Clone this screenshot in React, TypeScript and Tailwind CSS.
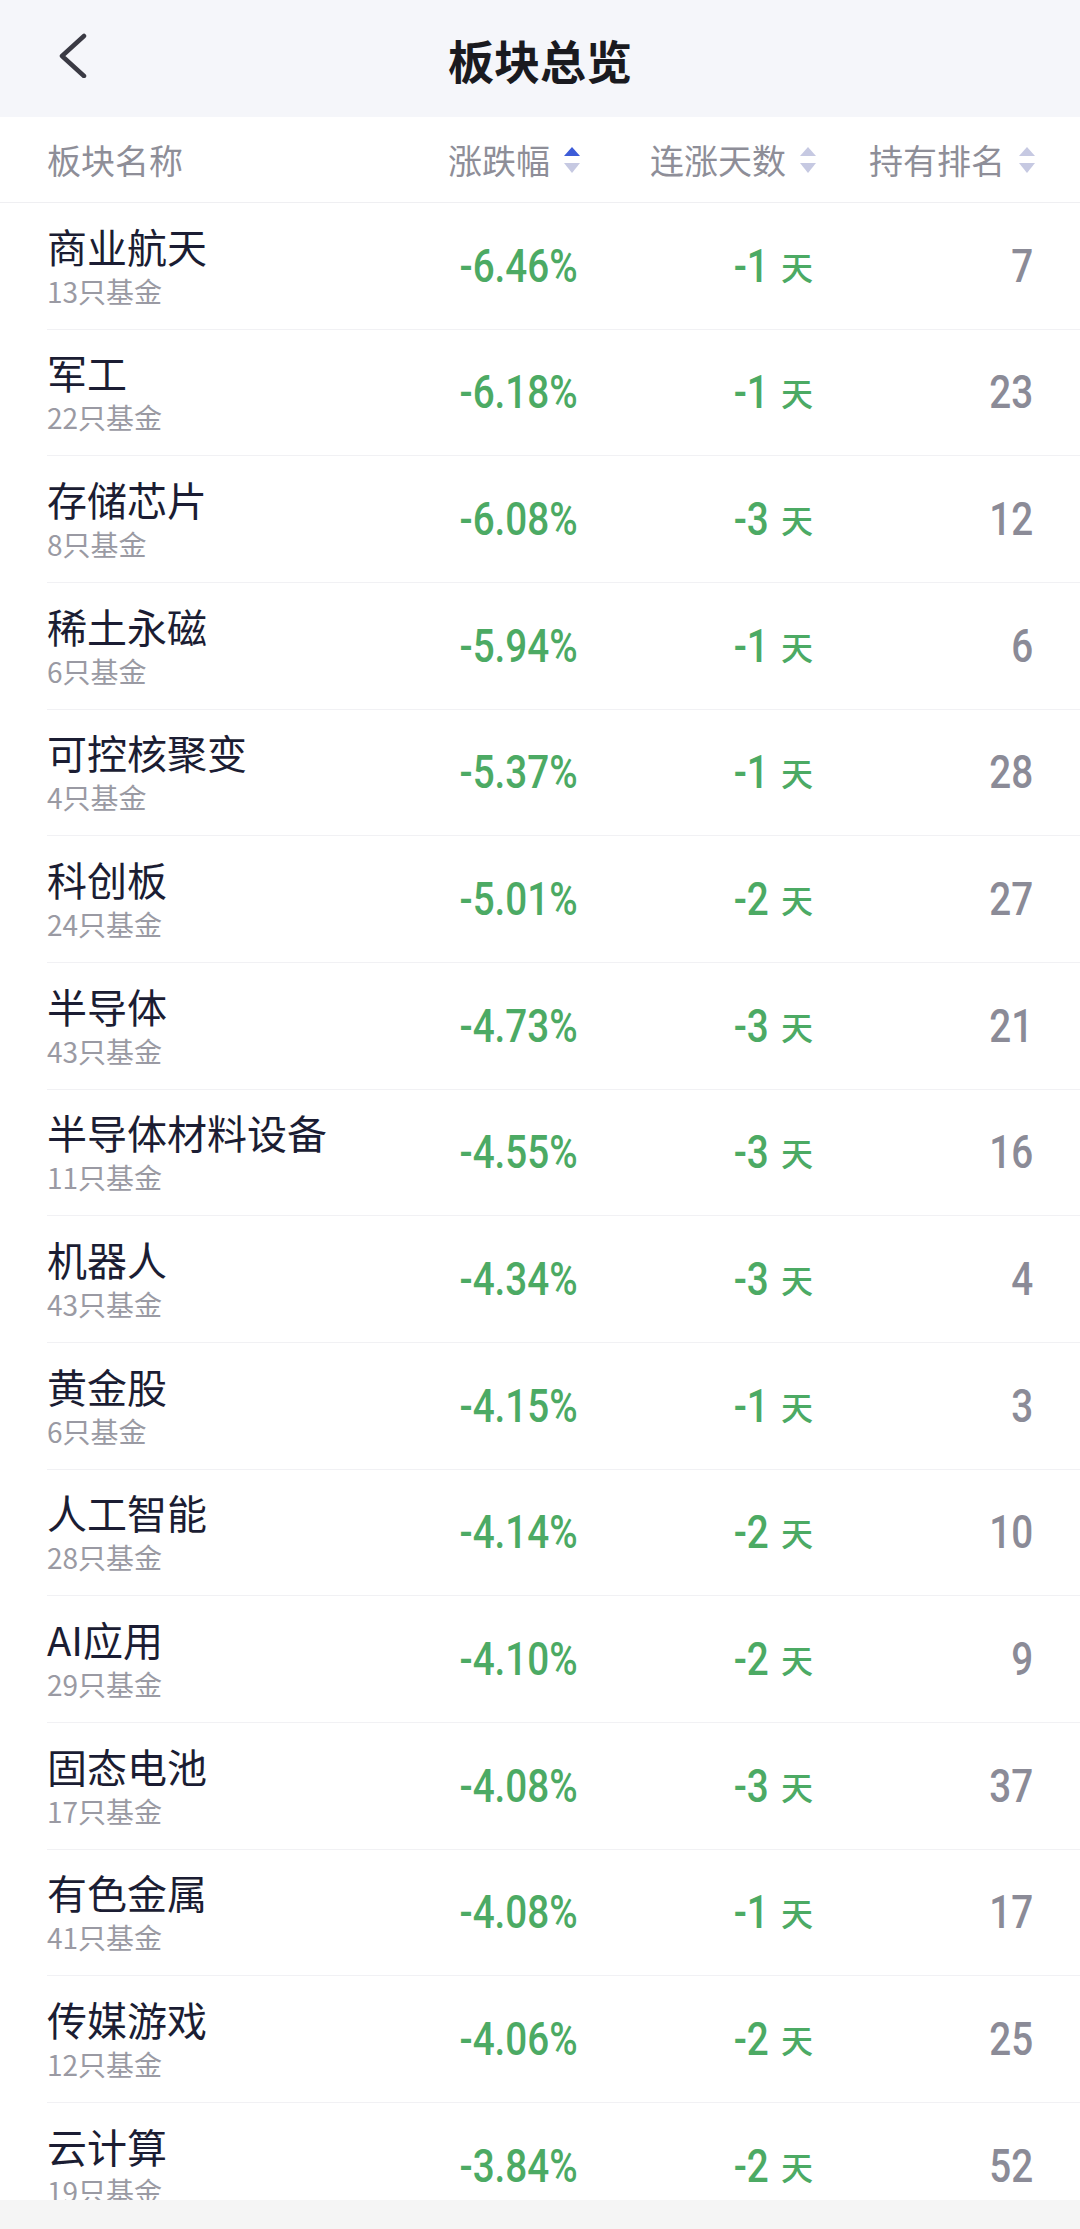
import React from "react";

type Sector = { name: string; funds: number; change: string; days: number; rank: number };

const sectors: Sector[] = [
  { name: "商业航天", funds: 13, change: "-6.46%", days: -1, rank: 7 },
  { name: "军工", funds: 22, change: "-6.18%", days: -1, rank: 23 },
  { name: "存储芯片", funds: 8, change: "-6.08%", days: -3, rank: 12 },
  { name: "稀土永磁", funds: 6, change: "-5.94%", days: -1, rank: 6 },
  { name: "可控核聚变", funds: 4, change: "-5.37%", days: -1, rank: 28 },
  { name: "科创板", funds: 24, change: "-5.01%", days: -2, rank: 27 },
  { name: "半导体", funds: 43, change: "-4.73%", days: -3, rank: 21 },
  { name: "半导体材料设备", funds: 11, change: "-4.55%", days: -3, rank: 16 },
  { name: "机器人", funds: 43, change: "-4.34%", days: -3, rank: 4 },
  { name: "黄金股", funds: 6, change: "-4.15%", days: -1, rank: 3 },
  { name: "人工智能", funds: 28, change: "-4.14%", days: -2, rank: 10 },
  { name: "AI应用", funds: 29, change: "-4.10%", days: -2, rank: 9 },
  { name: "固态电池", funds: 17, change: "-4.08%", days: -3, rank: 37 },
  { name: "有色金属", funds: 41, change: "-4.08%", days: -1, rank: 17 },
  { name: "传媒游戏", funds: 12, change: "-4.06%", days: -2, rank: 25 },
  { name: "云计算", funds: 19, change: "-3.84%", days: -2, rank: 52 },
];

const cjk = "font-['Noto_Sans_CJK_SC','Noto_Sans',sans-serif]";
// narrow DIN-like figures: Roboto medium squeezed horizontally
const num = "inline-block origin-right scale-x-[0.84] font-['Roboto',sans-serif] text-[46px] font-medium leading-none";

function SortIcon({ active }: { active?: boolean }) {
  return (
    <svg width="16" height="26" viewBox="0 0 16 26" className="ml-[14px] shrink-0">
      <polygon points="0,9 8,0 16,9" fill={active ? "#3d5cd8" : "#c6c9e2"} />
      <polygon points="0,16 16,16 8,26" fill="#c6c9e2" />
    </svg>
  );
}

export default function App() {
  return (
    <div className={`flex h-[2229px] w-[1080px] flex-col overflow-hidden bg-white ${cjk}`}>
      {/* top bar */}
      <header className="relative flex h-[117px] shrink-0 items-center justify-center bg-[#f5f6fa]">
        <button className="absolute left-[52px] top-[30px] flex h-[50px] w-[40px] items-center justify-center" aria-label="返回">
          <svg width="30" height="46" viewBox="0 0 30 46">
            <polyline points="27,4 5,24 27,44" fill="none" stroke="#3a3a44" strokeWidth="4.5" strokeLinecap="round" strokeLinejoin="round" />
          </svg>
        </button>
        <h1 className="text-[46px] font-bold leading-none text-[#1a1a1f]">板块总览</h1>
      </header>

      {/* column headings */}
      <div className="flex h-[86px] shrink-0 items-center border-b border-[#efeff2] pl-[47px] pr-[45px] text-[34px] text-[#8e8e98]">
        <div className="flex-1">板块名称</div>
        <div className="flex w-[200px] items-center justify-end">
          涨跌幅
          <SortIcon active />
        </div>
        <div className="flex w-[236px] items-center justify-end">
          连涨天数
          <SortIcon />
        </div>
        <div className="flex w-[219px] items-center justify-end">
          持有排名
          <SortIcon />
        </div>
      </div>

      {/* rows */}
      <div className="flex-1 overflow-hidden">
        {sectors.map((s) => (
          <div key={s.name} className="flex h-[126.67px] items-center pl-[47px]">
            <div className="flex h-full flex-1 items-center border-b border-[#f1f1f4] pr-[45px]">
              <div className="flex-1">
                <div className="text-[40px] leading-[46px] text-[#1b1d33]">{s.name}</div>
                <div className="mt-[4px] text-[28px] leading-[36px] text-[#9a9aa3]">{s.funds}只基金</div>
              </div>
              <div className="w-[160px] pr-[2px] text-right text-[#4caa64]">
                <span className={num}>{s.change}</span>
              </div>
              <div className="flex w-[236px] items-center justify-end pr-[3px] text-[#4caa64]">
                <span className={num}>{s.days}</span>
                <span className="ml-[12px] text-[32px] font-medium leading-none">天</span>
              </div>
              <div className="w-[219px] pr-[2px] text-right text-[#8b8b97]">
                <span className={num}>{s.rank}</span>
              </div>
            </div>
          </div>
        ))}
      </div>

      {/* bottom bar */}
      <div className="h-[29px] shrink-0 bg-[#f5f5f5]" />
    </div>
  );
}
